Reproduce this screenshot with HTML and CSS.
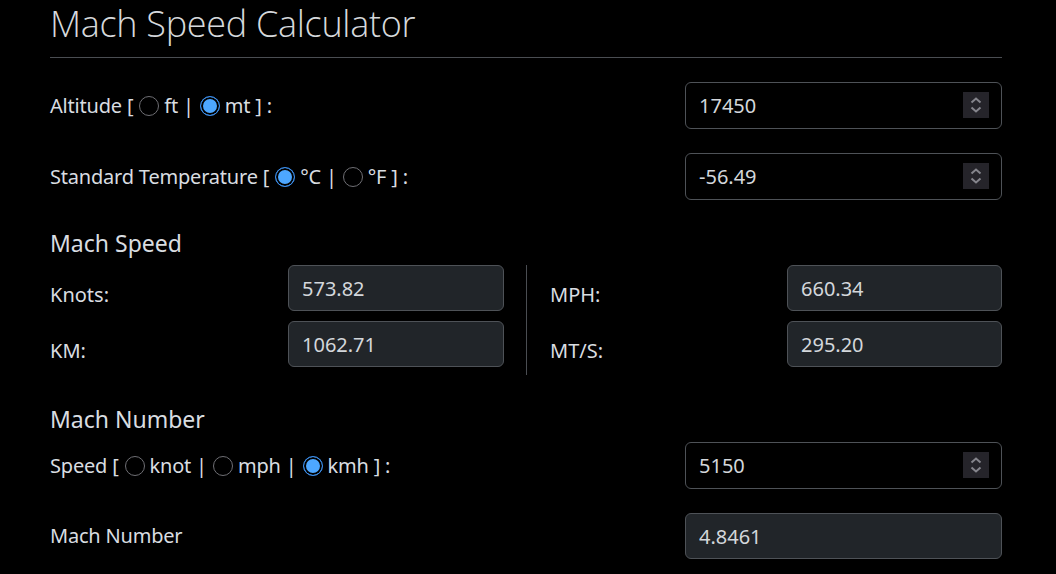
FILE: index.html
```html
<!DOCTYPE html>
<html lang="en">
<head>
<meta charset="utf-8">
<title>Mach Speed Calculator</title>
<link rel="stylesheet" href="styles.css">
</head>
<body>
<main class="container">
  <h1 class="title">Mach Speed Calculator</h1>

  <div class="row">
    <div class="label">Altitude [<input class="radio" type="radio" name="alt">ft |<input class="radio" type="radio" name="alt" checked>mt ] :</div>
    <div class="field">
      <input class="control" type="text" value="17450">
      <span class="spin"><svg width="26" height="26" viewBox="0 0 26 26"><path d="M8.5 10.5 L13 6.5 L17.5 10.5 M8.5 15.5 L13 19.5 L17.5 15.5" fill="none" stroke="#85858c" stroke-width="2"/></svg></span>
    </div>
  </div>

  <div class="row">
    <div class="label">Standard Temperature [<input class="radio" type="radio" name="tmp" checked>°C |<input class="radio" type="radio" name="tmp">°F ] :</div>
    <div class="field">
      <input class="control" type="text" value="-56.49">
      <span class="spin"><svg width="26" height="26" viewBox="0 0 26 26"><path d="M8.5 10.5 L13 6.5 L17.5 10.5 M8.5 15.5 L13 19.5 L17.5 15.5" fill="none" stroke="#85858c" stroke-width="2"/></svg></span>
    </div>
  </div>

  <h4 class="section first">Mach Speed</h4>
  <div class="speeds">
    <div class="half">
      <div class="pair"><span class="plabel">Knots:</span><input class="control ro" type="text" value="573.82" readonly></div>
      <div class="pair"><span class="plabel">KM:</span><input class="control ro" type="text" value="1062.71" readonly></div>
    </div>
    <div class="divider"></div>
    <div class="half">
      <div class="pair"><span class="plabel">MPH:</span><input class="control ro" type="text" value="660.34" readonly></div>
      <div class="pair"><span class="plabel">MT/S:</span><input class="control ro" type="text" value="295.20" readonly></div>
    </div>
  </div>

  <h4 class="section second">Mach Number</h4>
  <div class="row tight">
    <div class="label">Speed [<input class="radio" type="radio" name="spd">knot |<input class="radio" type="radio" name="spd">mph |<input class="radio" type="radio" name="spd" checked>kmh ] :</div>
    <div class="field">
      <input class="control" type="text" value="5150">
      <span class="spin"><svg width="26" height="26" viewBox="0 0 26 26"><path d="M8.5 10.5 L13 6.5 L17.5 10.5 M8.5 15.5 L13 19.5 L17.5 15.5" fill="none" stroke="#85858c" stroke-width="2"/></svg></span>
    </div>
  </div>
  <div class="row">
    <div class="label">Mach Number</div>
    <div class="field">
      <input class="control ro" type="text" value="4.8461" readonly>
    </div>
  </div>
</main>
</body>
</html>
```

FILE: styles.css
```css
html, body {
  margin: 0;
  padding: 0;
  background: #000;
}
body {
  color: #d9dde1;
  font-family: "Noto Sans", "Open Sans", "DejaVu Sans", sans-serif;
  font-size: 20px;
}
.container {
  width: 952px;
  margin-left: 50px;
}
.title {
  margin: 0;
  font-family: "Open Sans", "Noto Sans", sans-serif;
  font-size: 36px;
  font-weight: 300;
  letter-spacing: -0.3px;
  line-height: 45px;
  padding: 1px 0 11px;
  border-bottom: 1px solid #4a4d52;
  color: #d6d9dc;
}
.row {
  display: flex;
  align-items: center;
  justify-content: space-between;
  margin-top: 24px;
}
.row.tight {
  margin-top: 9px;
}
.label {
  display: flex;
  align-items: center;
  white-space: pre;
  line-height: 30px;
  letter-spacing: -0.2px;
}
.radio {
  appearance: none;
  -webkit-appearance: none;
  margin: 0 5px 0 6px;
  width: 20px;
  height: 20px;
  flex: none;
  border-radius: 50%;
  border: 1px solid #6f6f74;
  background: #000;
  box-sizing: border-box;
}
.radio:checked {
  border: 1.5px solid #3a8ded;
  background: #4da7ff;
  box-shadow: inset 0 0 0 2px #000;
}
.field {
  position: relative;
  width: 317px;
}
.control {
  display: block;
  width: 100%;
  box-sizing: border-box;
  height: 47px;
  margin: 0;
  padding: 0 13px;
  font-family: inherit;
  font-size: 20px;
  color: #d3d7db;
  background: #000;
  border: 1px solid #4e5257;
  border-radius: 6px;
  outline: none;
}
.control.ro {
  background: #212529;
  height: 46px;
}
.spin {
  position: absolute;
  right: 13px;
  top: 10px;
  width: 26px;
  height: 26px;
  background: #25242a;
  display: block;
}
.spin svg {
  display: block;
}
.section {
  margin: 0;
  font-size: 23px;
  font-weight: 400;
  line-height: 28px;
}
.section.first {
  margin-top: 29px;
}
.section.second {
  margin-top: 30px;
}
.speeds {
  display: flex;
  margin-top: 8px;
  height: 110px;
}
.half {
  width: 454px;
  display: flex;
  flex-direction: column;
  gap: 10px;
}
.divider {
  width: 1px;
  background: #4a4d52;
  margin: 0 23px 0 22px;
}
.speeds .half:last-child {
  width: 452px;
}
.pair {
  display: grid;
  grid-template-columns: 238px 216px;
  align-items: center;
}
.speeds .half:last-child .pair {
  grid-template-columns: 237px 215px;
}
.plabel {
  padding-top: 12px;
}
```
